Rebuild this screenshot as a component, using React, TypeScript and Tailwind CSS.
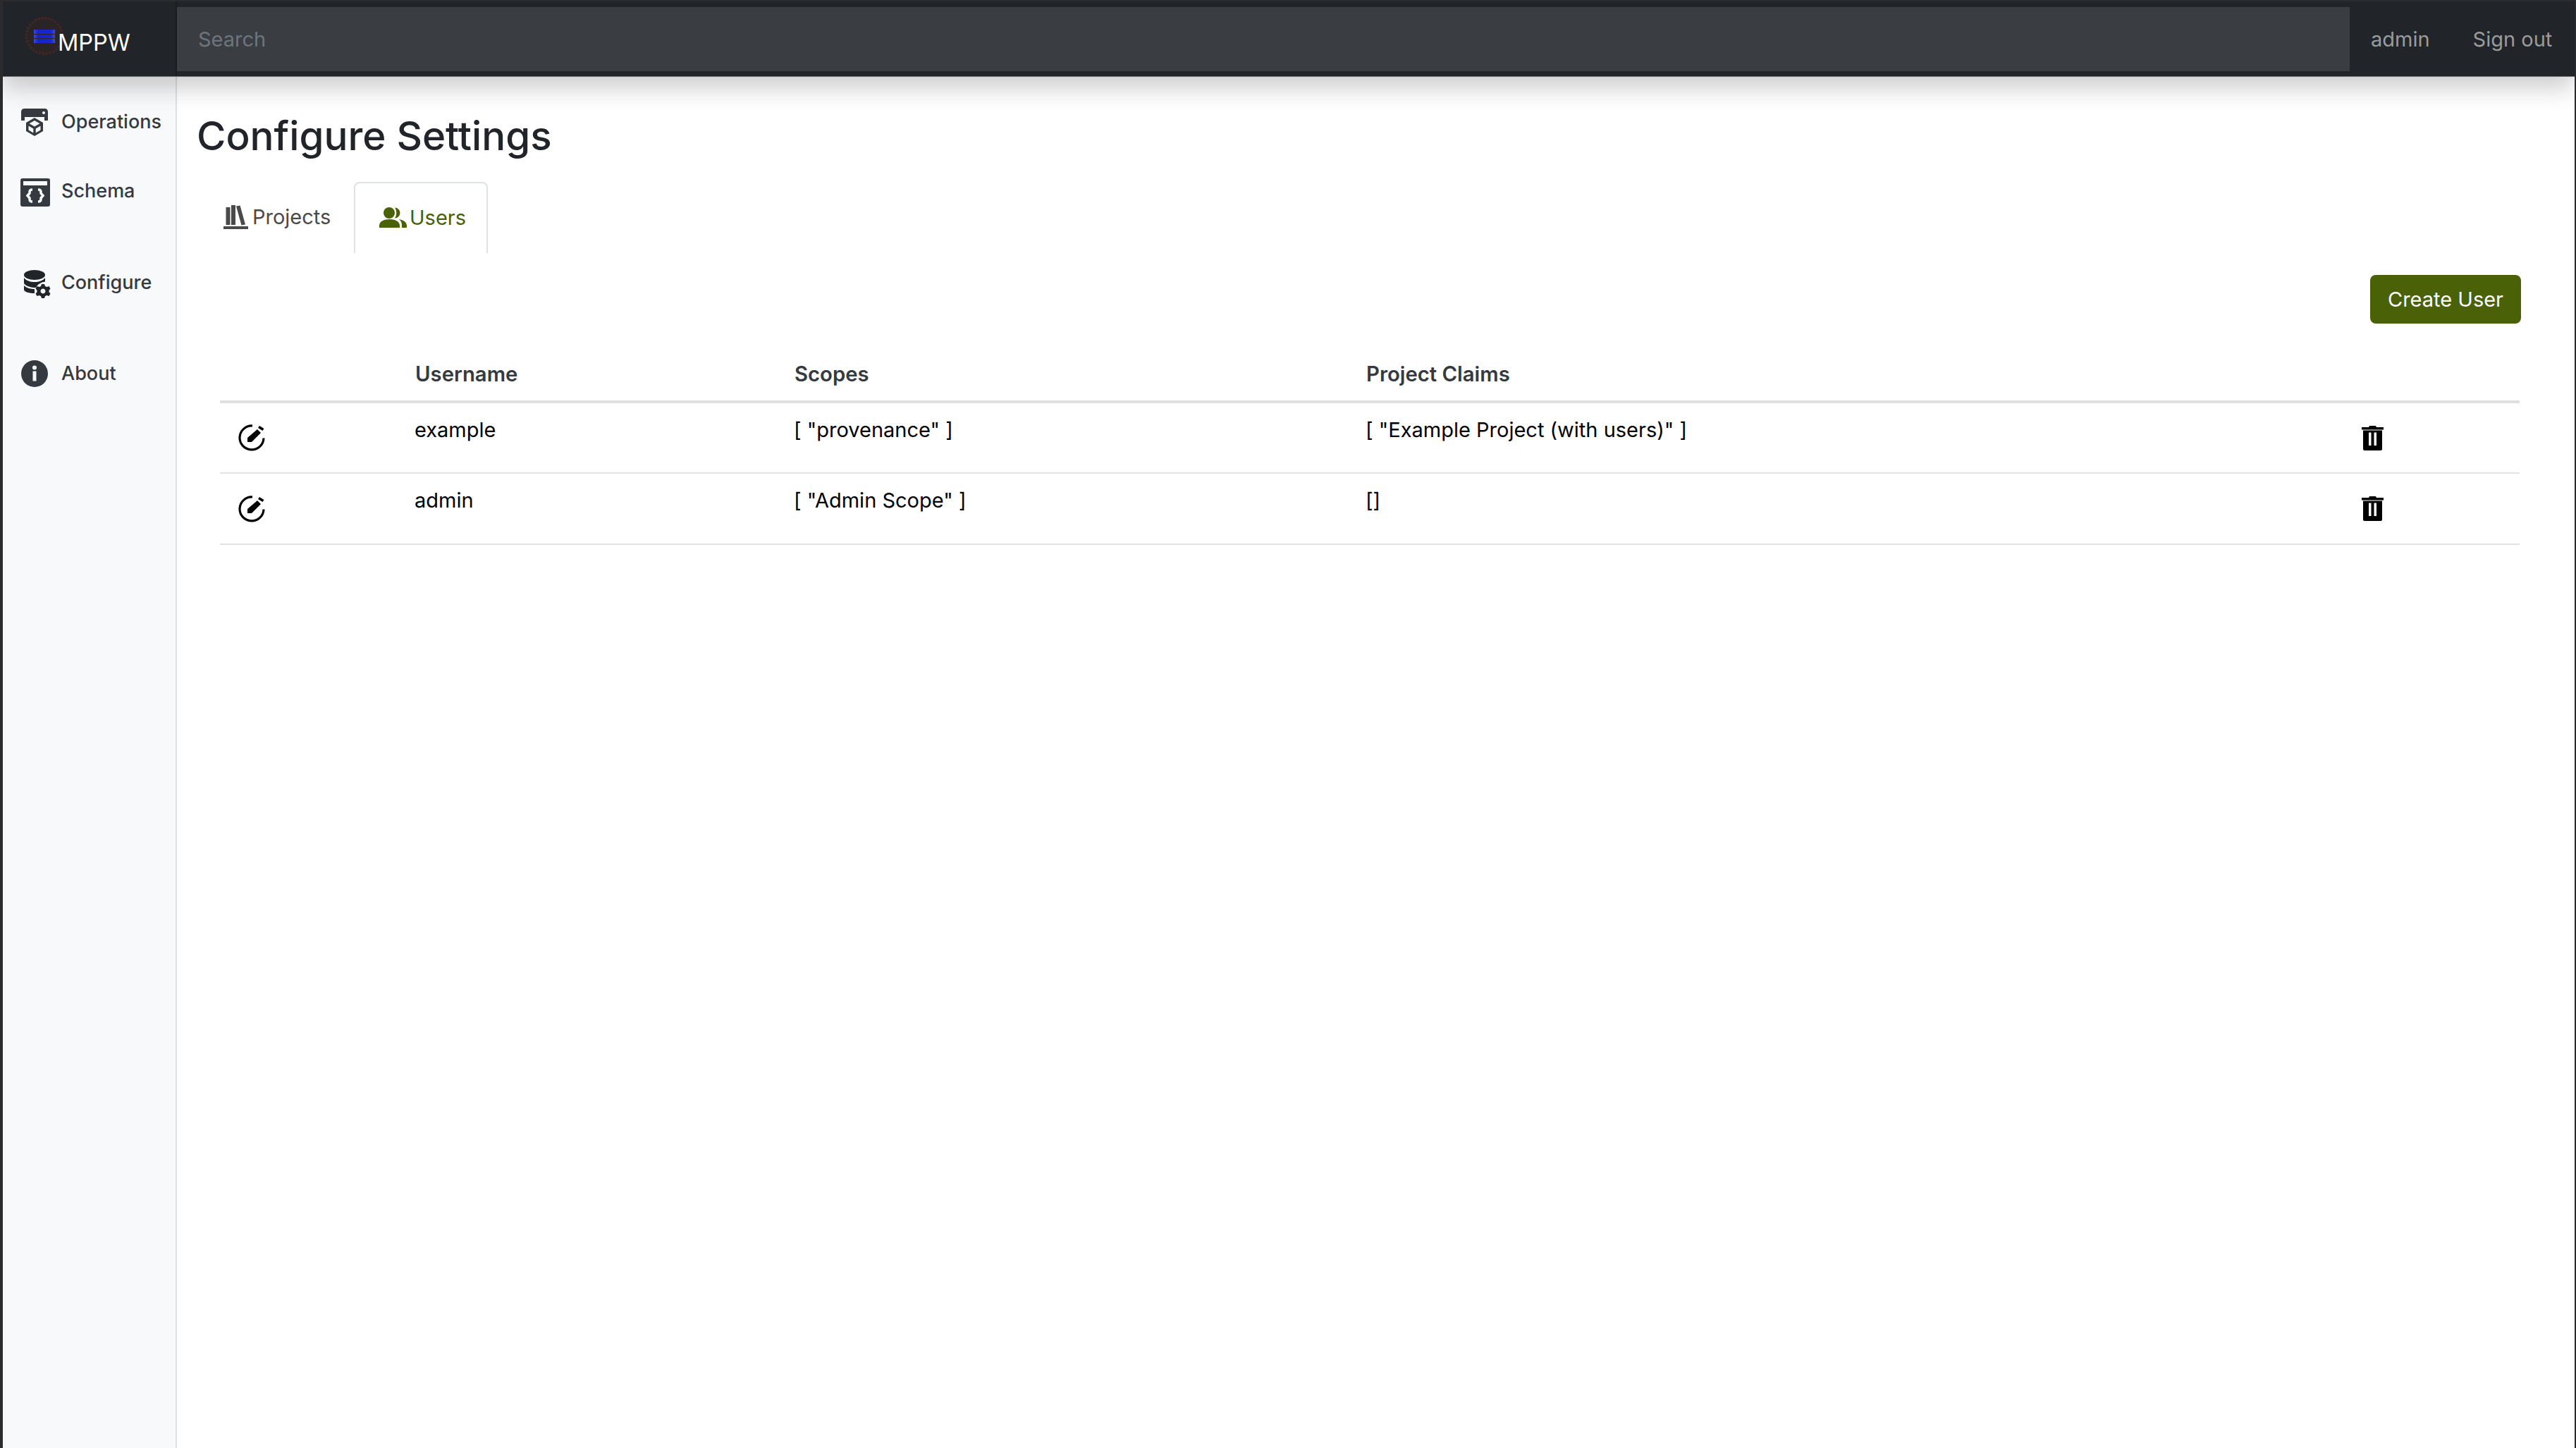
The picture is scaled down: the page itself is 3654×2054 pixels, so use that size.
const font = "[font-family:Inter,'Liberation_Sans',sans-serif]";

function Logo() {
  return (
    <svg viewBox="0 0 54 54" className="w-[54px] h-[54px] shrink-0 -mt-[9px]">
      <defs>
        <linearGradient id="bar" x1="0" x2="1" y1="0" y2="0">
          <stop offset="0" stopColor="#3a4ad8" />
          <stop offset="0.2" stopColor="#1426c8" />
          <stop offset="0.8" stopColor="#1426d0" />
          <stop offset="1" stopColor="#3a4ad8" />
        </linearGradient>
      </defs>
      <circle cx="27" cy="27" r="25.500" fill="#2a2427" stroke="#4a2622" strokeWidth="3" strokeDasharray="3 2" />
      <rect x="12" y="18" width="30" height="6" fill="url(#bar)" />
      <rect x="12" y="25" width="30" height="5" fill="url(#bar)" />
      <rect x="12" y="31" width="30" height="6" fill="url(#bar)" />
    </svg>
  );
}

function OperationsIcon() {
  return (
    <svg viewBox="0 0 38 39" className="w-[38px] h-[39px]" fill="#343a40">
      <path d="M0 17V5q0-5 5-5h28q5 0 5 5v12h-5v-5H5v5z" />
      <circle cx="32" cy="6" r="2" fill="#f8f9fa" />
      <path fillRule="evenodd" d="M19 13l12 7v12l-12 7-12-7V20zM19 17l-7.500 4.300 7.500 4.300 7.500-4.300zM10.500 24.500v6l6.800 4v-6zM27.500 24.500l-6.800 4v6l6.800-4z" />
    </svg>
  );
}

function SchemaIcon() {
  return (
    <svg viewBox="0 0 42 40" className="w-[42px] h-[40px] -ml-[1px] mt-[4px]">
      <rect x="0" y="0" width="42" height="40" rx="3" fill="#343a40" />
      <rect x="4" y="4" width="34" height="6" fill="#f8f9fa" />
      <path d="M17 16q-4 0-4 3v2l-3 3.500 3 3.500v2q0 3 4 3M25 16q4 0 4 3v2l3 3.500-3 3.500v2q0 3-4 3" fill="none" stroke="#f8f9fa" strokeWidth="3.500" />
    </svg>
  );
}

function ConfigureIcon() {
  return (
    <svg viewBox="0 0 38 40" className="w-[38px] h-[40px] ml-[4px] mt-[4px]" fill="#212529">
      <ellipse cx="15" cy="7" rx="15" ry="7" />
      <path d="M0 11c3 4 9 6 15 6 6 0 12-2 15-6v5.500c-6 1-11 4-13 8.500-7 0-14-2-17-6zM0 22c4 4 10 5 15 5v6c-7 0-15-2-15-5z" />
      <path fillRule="evenodd" d="M25 20h4l1 3 2.500 1 3-1 2 3.500-2 2.300v2.400l2 2.300-2 3.500-3-1-2.500 1-1 3h-4l-1-3-2.500-1-3 1-2-3.500 2-2.300v-2.400l-2-2.300 2-3.500 3 1 2.500-1zM27 26.500a3.500 3.500 0 1 0 .01 0z" />
    </svg>
  );
}

function AboutIcon() {
  return (
    <svg viewBox="0 0 38 38" className="w-[38px] h-[38px]">
      <circle cx="19" cy="19" r="19" fill="#343a40" />
      <rect x="16.500" y="15.500" width="5" height="14" fill="#f8f9fa" />
      <circle cx="19" cy="10.500" r="3" fill="#f8f9fa" />
    </svg>
  );
}

function BooksIcon() {
  return (
    <svg viewBox="0 0 35 34" className="w-[35px] h-[34px] shrink-0" fill="#4a4a4a">
      <rect x="0" y="30" width="35" height="4" />
      <rect x="3.500" y="3" width="6" height="25" />
      <rect x="11" y="0" width="6" height="28" />
      <path d="M18 1.500l5.500-1 7.500 27-5.500 1z" />
    </svg>
  );
}

function UsersIcon() {
  return (
    <svg viewBox="0 0 39 29" className="w-[39px] h-[29px] shrink-0" fill="#4a6108">
      <circle cx="14" cy="8" r="8" />
      <path d="M0 29v-3c0-6 7-9 14.500-9s14.500 3 14.500 9v3z" />
      <path d="M22 0.500a7.500 7.500 0 0 1 0 15c3-4 3-11 0-15zM28 17c6 1 11 4 11 9v3h-7v-3c0-4-1-6.500-4-9z" />
    </svg>
  );
}

function EditIcon() {
  return (
    <svg viewBox="0 0 38 38" className="w-[38px] h-[38px]">
      <path d="M20 2A17 17 0 1 0 36 19.500" fill="none" stroke="#000" strokeWidth="3.200" />
      <path d="M13 25v-6L27 7l5 5-13 13z" fill="#000" />
      <path d="M30 2l6.500 4-2 3-6.500-4z" fill="#000" />
    </svg>
  );
}

function TrashIcon() {
  return (
    <svg viewBox="0 0 31 35" className="w-[31px] h-[35px]">
      <path d="M0 2h10l1-2h9l1 2h10v3.500H0zM2 6.500h27V33q0 2-2 2H4q-2 0-2-2z" fill="#000" />
      <rect x="10" y="9.500" width="3.500" height="18.500" fill="#fff" />
      <rect x="17.500" y="9.500" width="3.500" height="18.500" fill="#fff" />
    </svg>
  );
}

function SideItem({ icon, label, className }: { icon: React.ReactNode; label: string; className: string }) {
  return (
    <a className={`flex items-center pl-[26px] h-[40px] ${className}`}>
      <span className="w-[57px] flex shrink-0">{icon}</span>
      <span className="text-[27px] font-medium text-[#343a40] mt-[1px]">{label}</span>
    </a>
  );
}

const rows = [
  { name: "example", scopes: '[ "provenance" ]', claims: '[ "Example Project (with users)" ]' },
  { name: "admin", scopes: '[ "Admin Scope" ]', claims: "[]" },
];

export default function App() {
  return (
    <div className={`w-[3654px] h-[2054px] overflow-hidden flex flex-col bg-white border-l-4 border-r-2 border-t-2 border-[#2b2b2d] ${font}`}>
      <header className="relative z-10 h-[107px] shrink-0 bg-[#212529] flex items-center border-b border-[#6c6f72] shadow-[0_16px_32px_rgba(0,0,0,0.2)]">
        <div className="w-[247px] h-full flex items-center pl-[32px] shrink-0 border-r-2 border-[#1a1d20]">
          <Logo />
          <span className="text-[32.500px] text-white -ml-[8px] mt-[13px]">MPPW</span>
        </div>
        <div className="flex-1 h-[91px] bg-[#3a3d41] flex items-center px-[30px] pt-[2px] text-[29px] text-[#6c757d]">Search</div>
        <div className="w-[319px] h-full flex items-center text-[29px] text-[#9a9b9d] pl-[30px] pt-[2px] gap-[61px]">
          <span>admin</span>
          <span>Sign out</span>
        </div>
      </header>
      <div className="flex-1 flex min-h-0">
        <aside className="w-[247px] shrink-0 bg-[#f8f9fa] border-r-2 border-[#dee0e2] pt-[44px] flex flex-col">
          <SideItem icon={<OperationsIcon />} label="Operations" className="mb-[58px]" />
          <SideItem icon={<SchemaIcon />} label="Schema" className="mb-[90px]" />
          <SideItem icon={<ConfigureIcon />} label="Configure" className="mb-[89px]" />
          <SideItem icon={<AboutIcon />} label="About" className="" />
        </aside>
        <main className="flex-1 min-w-0 pl-[30px] pr-[76px] pt-[48px] text-[#212529]">
          <h1 className="text-[56.500px] font-medium leading-[72px] m-0 -ml-[2px]">Configure Settings</h1>
          <nav className="flex mt-[29px] ml-[36px] h-[101px]">
            <a className="w-[185px] flex items-center gap-[6px] pb-[2px] text-[29px] text-[#4a4a4a]">
              <BooksIcon />
              <span>Projects</span>
            </a>
            <a className="w-[190px] flex items-center pl-[34px] gap-[4px] pb-[2px] text-[29px] text-[#4a6108] border-2 border-b-0 border-[#dee2e6] rounded-t-[8px]">
              <UsersIcon />
              <span>Users</span>
            </a>
          </nav>
          <div className="flex justify-end mt-[31px]">
            <button className="w-[214px] h-[69px] rounded-[8px] bg-[#4a6108] text-white text-[29px]">Create User</button>
          </div>
          <table className="ml-[31px] mt-[35px] w-[3262px] table-fixed border-collapse">
            <thead>
              <tr className="h-[76px] border-b-4 border-[#dfdfdf]">
                <th className="w-[253px]"></th>
                <th className="w-[538px] pl-[24px] text-left font-semibold text-[29.300px] text-[#343a40]">Username</th>
                <th className="w-[811px] pl-[24px] text-left font-semibold text-[29.300px] text-[#343a40]">Scopes</th>
                <th className="w-[1405px] pl-[24px] text-left font-semibold text-[29.300px] text-[#343a40]">Project Claims</th>
                <th></th>
              </tr>
            </thead>
            <tbody>
              {rows.map((r) => (
                <tr key={r.name} className="h-[101px] border-b-2 border-[#e2e2e2] text-[29px] text-black">
                  <td className="pl-[26px] align-middle"><EditIcon /></td>
                  <td className="pl-[23px] align-top pt-[16px]">{r.name}</td>
                  <td className="pl-[23px] align-top pt-[16px]">{r.scopes}</td>
                  <td className="pl-[23px] align-top pt-[16px]">{r.claims}</td>
                  <td className="pl-[31px] align-middle"><TrashIcon /></td>
                </tr>
              ))}
            </tbody>
          </table>
        </main>
      </div>
    </div>
  );
}
